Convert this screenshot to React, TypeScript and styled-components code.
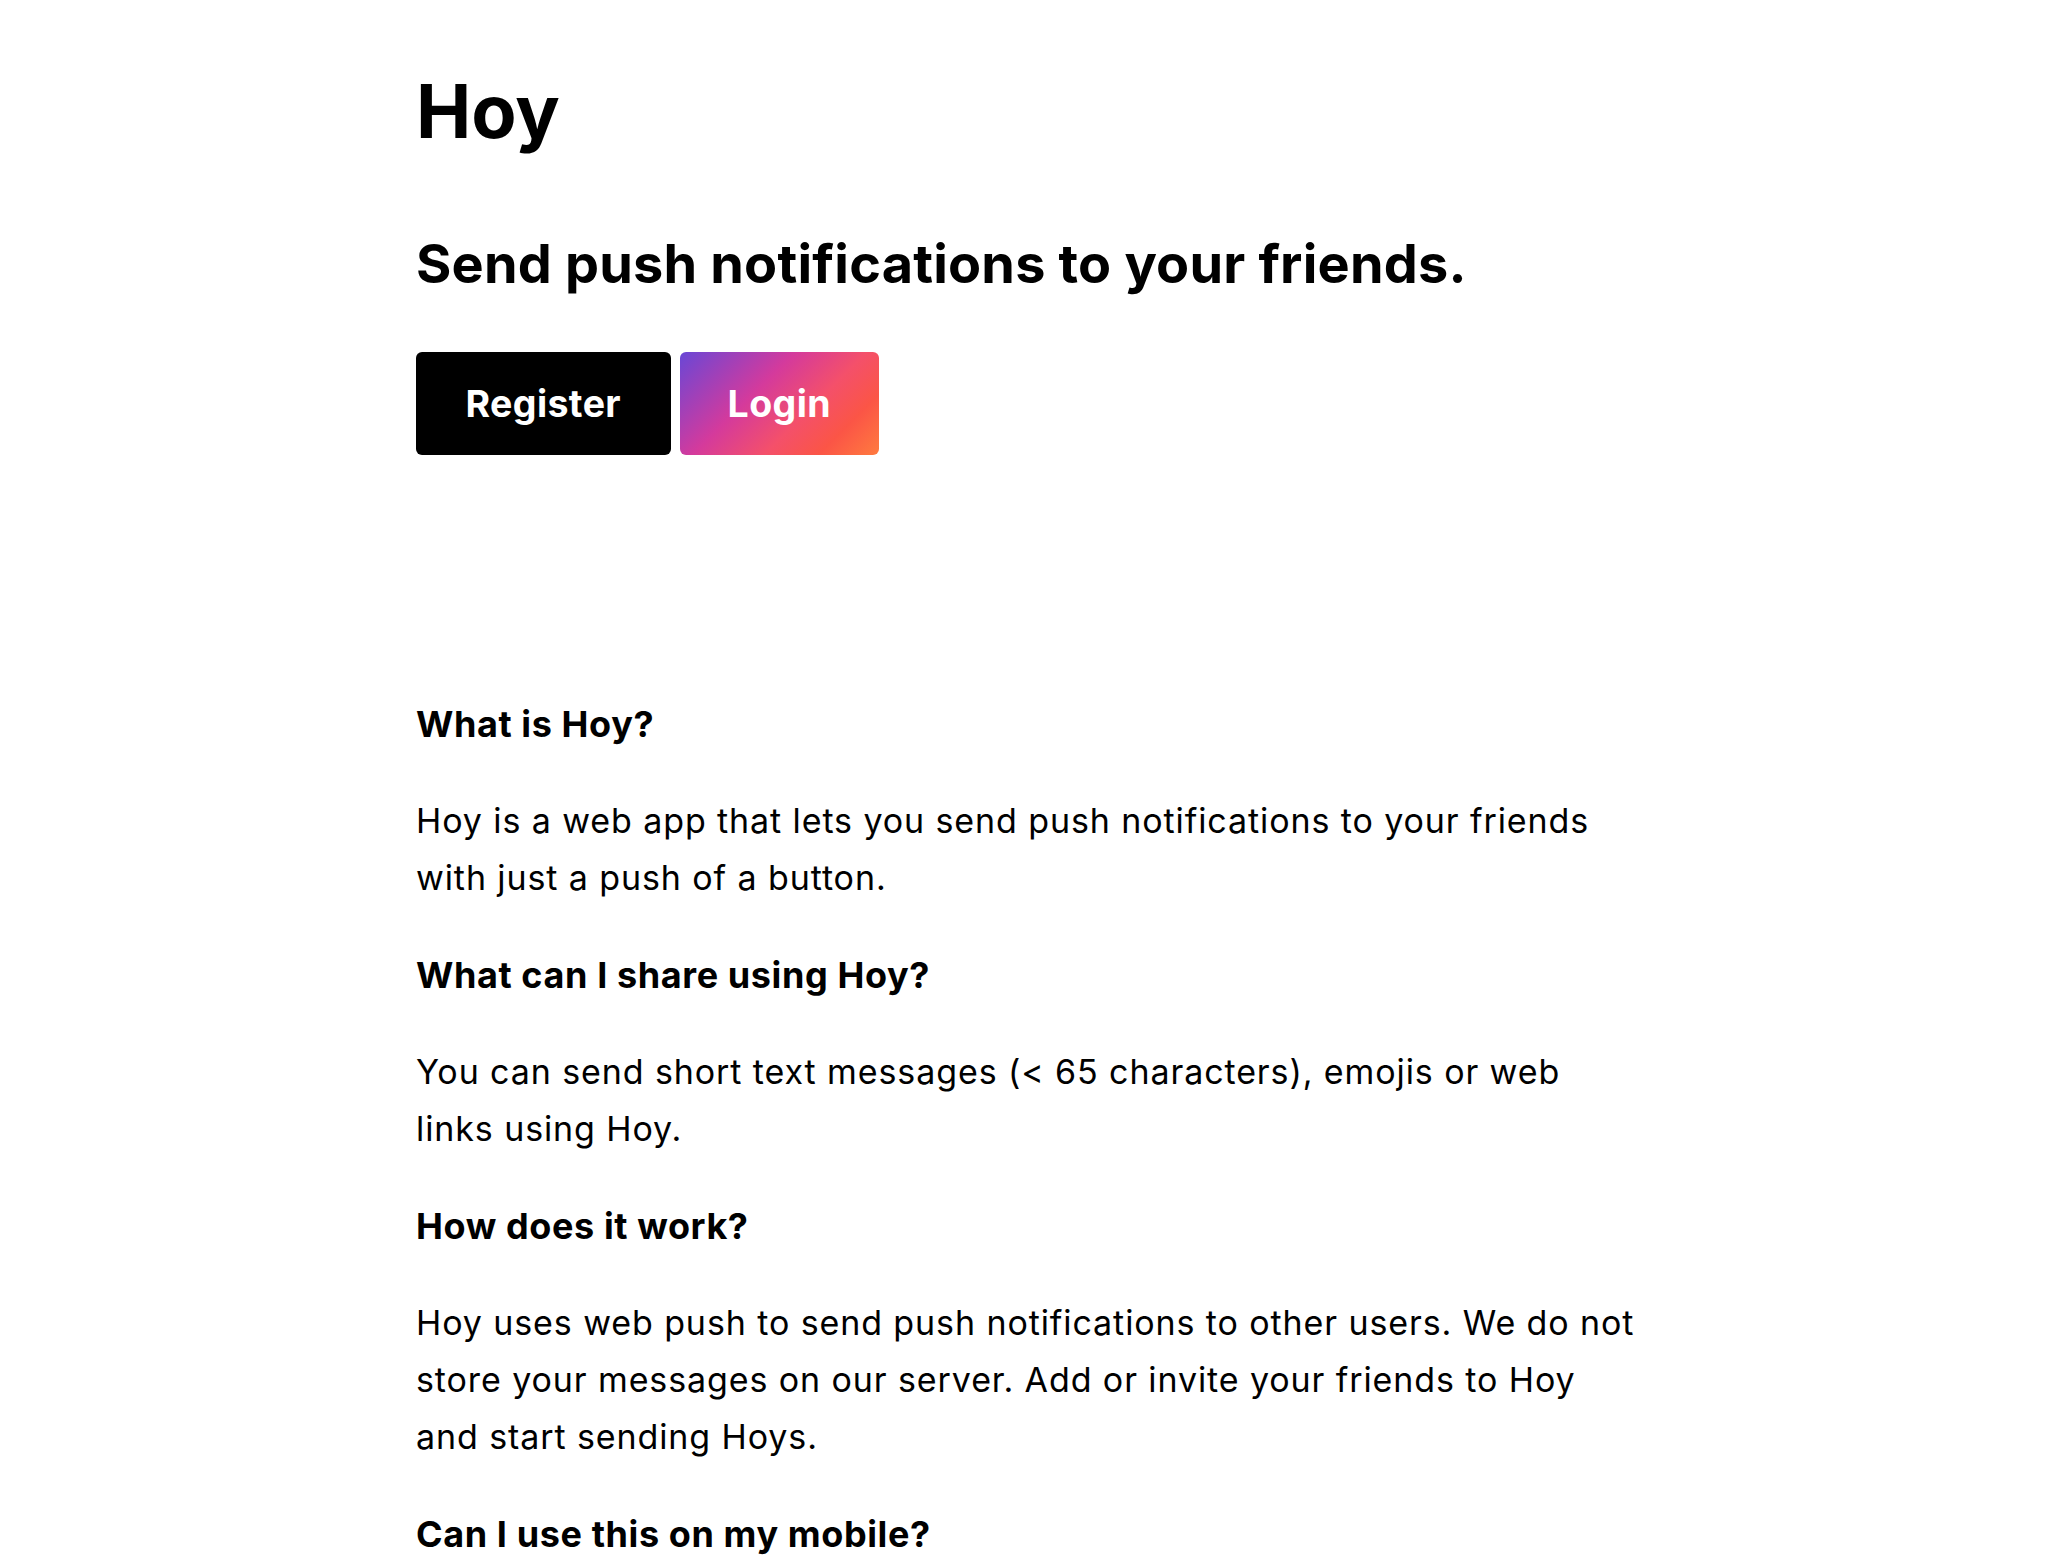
import React from 'react'
import styled, { createGlobalStyle } from 'styled-components'

const faq = [
  {
    q: 'What is Hoy?',
    a: 'Hoy is a web app that lets you send push notifications to your friends with just a push of a button.',
  },
  {
    q: 'What can I share using Hoy?',
    a: 'You can send short text messages (< 65 characters), emojis or web links using Hoy.',
  },
  {
    q: 'How does it work?',
    a: 'Hoy uses web push to send push notifications to other users. We do not store your messages on our server. Add or invite your friends to Hoy and start sending Hoys.',
  },
  {
    q: 'Can I use this on my mobile?',
    a: 'Yes. Hoy works on any modern browser that supports web push, on desktop and on mobile.',
  },
]

const GlobalStyle = createGlobalStyle`
  html, body {
    margin: 0;
    padding: 0;
    background: #fff;
    color: #000;
    font-family: Inter, "Noto Sans", sans-serif;
  }
`

// column starts where a centred 1216px column would, text runs a bit wider
const Page = styled.main`
  width: 1228px;
  margin: 0 0 0 calc(50% - 608px);
  padding-top: 67px;
`

const Title = styled.h1`
  margin: 0;
  font-size: 74px;
  line-height: 89px;
  font-weight: 700;
`

const Tagline = styled.h2`
  margin: 75px 0 0;
  font-size: 54px;
  line-height: 66px;
  font-weight: 700;
  letter-spacing: 0.2px;
`

const Actions = styled.div`
  display: flex;
  gap: 9px;
  margin-top: 55px;
`

const Button = styled.button<{ $gradient?: boolean }>`
  height: 103px;
  padding: 0 ${(p) => (p.$gradient ? 48 : 49.5)}px;
  border: 0;
  border-radius: 6px;
  color: #fff;
  font-family: inherit;
  font-size: 37.5px;
  font-weight: 700;
  letter-spacing: 0.4px;
  cursor: pointer;
  background: ${(p) =>
    p.$gradient
      ? 'linear-gradient(135deg, #6947d6 0%, #d43a9c 38%, #f4506a 62%, #fb5546 80%, #ff7b3f 100%)'
      : '#000'};
`

const Faq = styled.section`
  margin-top: 247px;
`

const Question = styled.h3`
  margin: 0 0 46px;
  font-size: 36px;
  line-height: 44px;
  font-weight: 700;
  letter-spacing: 0.6px;
`

const Answer = styled.p`
  margin: 0 0 47px;
  font-size: 34px;
  line-height: 57px;
  font-weight: 400;
  letter-spacing: 0.9px;
`

const App = () => {
  return (
    <>
      <GlobalStyle />
      <Page>
        <Title>Hoy</Title>
        <Tagline>Send push notifications to your friends.</Tagline>
        <Actions>
          <Button>Register</Button>
          <Button $gradient>Login</Button>
        </Actions>
        <Faq>
          {faq.map((item) => (
            <div key={item.q}>
              <Question>{item.q}</Question>
              <Answer>{item.a}</Answer>
            </div>
          ))}
        </Faq>
      </Page>
    </>
  )
}

export default App
